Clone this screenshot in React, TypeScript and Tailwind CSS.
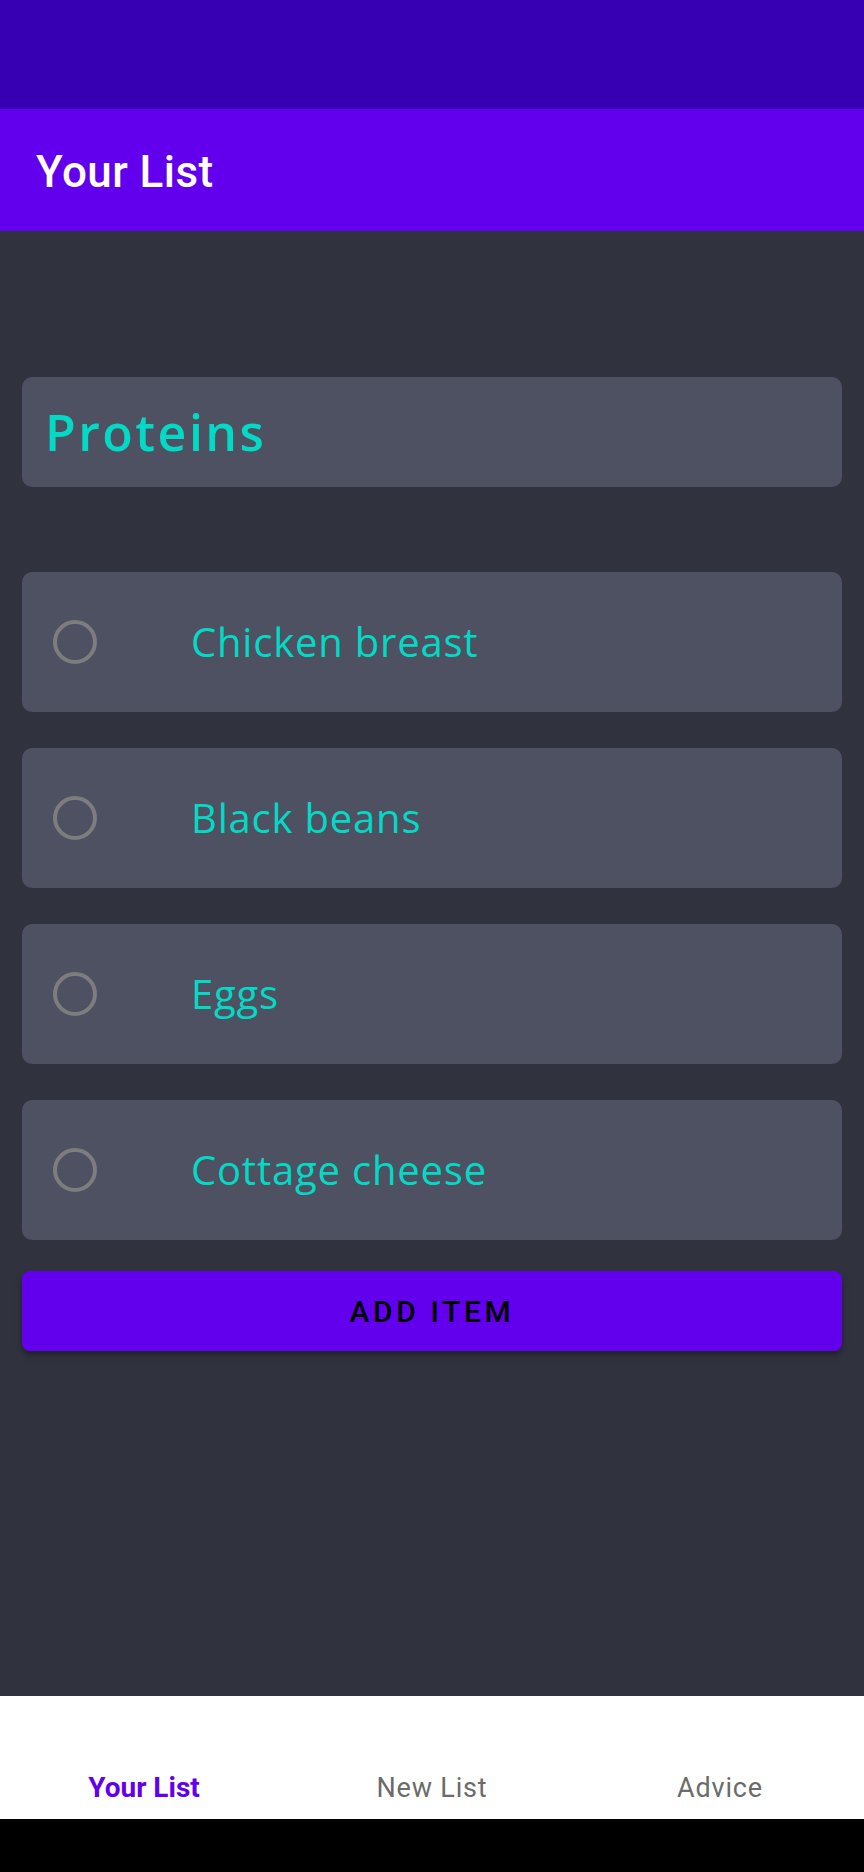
import { useState } from "react";

const items = ["Chicken breast", "Black beans", "Eggs", "Cottage cheese"];
const tabs = ["Your List", "New List", "Advice"];

export default function App() {
  const [active, setActive] = useState(0);
  const [checked, setChecked] = useState<number[]>([]);

  const toggle = (i: number) =>
    setChecked((c) => (c.includes(i) ? c.filter((x) => x !== i) : [...c, i]));

  return (
    <div className="w-[864px] h-[1872px] flex flex-col bg-[#30323e] font-['Roboto',sans-serif]">
      {/* STATUS BAR */}
      <div className="h-[109px] shrink-0 bg-[#3700b3]" />

      {/* APP BAR */}
      <header className="h-[122px] shrink-0 bg-[#6200ee] flex items-center px-9 pt-[4px]">
        <h1 className="text-[44px] font-medium text-white leading-none tracking-[0.01em]">Your List</h1>
      </header>

      {/* CONTENT */}
      <main className="flex-1 flex flex-col px-[22px] pt-[146px]">
        <div className="h-[110px] rounded-[10px] bg-[#4e5162] flex items-center px-[23px]">
          <h2 className="text-[50px] font-['Open_Sans',sans-serif] font-semibold text-[#03dac5] leading-none tracking-[0.05em]">
            Proteins
          </h2>
        </div>

        <ul className="mt-[85px] flex flex-col gap-9">
          {items.map((item, i) => (
            <li
              key={item}
              onClick={() => toggle(i)}
              className="h-[140px] rounded-[10px] bg-[#4e5162] flex items-center pl-[31px] cursor-pointer"
            >
              <span className="w-[44px] h-[44px] rounded-full border-[4px] border-[#7d7d7d] flex items-center justify-center">
                {checked.includes(i) && <span className="w-[22px] h-[22px] rounded-full bg-[#03dac5]" />}
              </span>
              <span className="ml-[94px] text-[40px] font-['Open_Sans',sans-serif] text-[#03dac5] leading-none tracking-[0.02em]">
                {item}
              </span>
            </li>
          ))}
        </ul>

        <button className="mt-[31px] h-[80px] rounded-[8px] bg-[#6200ee] text-black text-[30px] font-medium tracking-[0.12em] shadow-[0_4px_6px_rgba(0,0,0,0.35)]">
          ADD ITEM
        </button>
      </main>

      {/* BOTTOM NAV */}
      <nav className="h-[123px] shrink-0 bg-white grid grid-cols-3 items-end pb-[9px]">
        {tabs.map((t, i) => (
          <button
            key={t}
            onClick={() => setActive(i)}
            className={
              i === active
                ? "text-[28px] font-bold text-[#6200ee] leading-[44px]"
                : "text-[27px] text-[#6b6b6b] tracking-[0.03em] leading-[44px]"
            }
          >
            {t}
          </button>
        ))}
      </nav>
      <div className="h-[53px] shrink-0 bg-black" />
    </div>
  );
}
